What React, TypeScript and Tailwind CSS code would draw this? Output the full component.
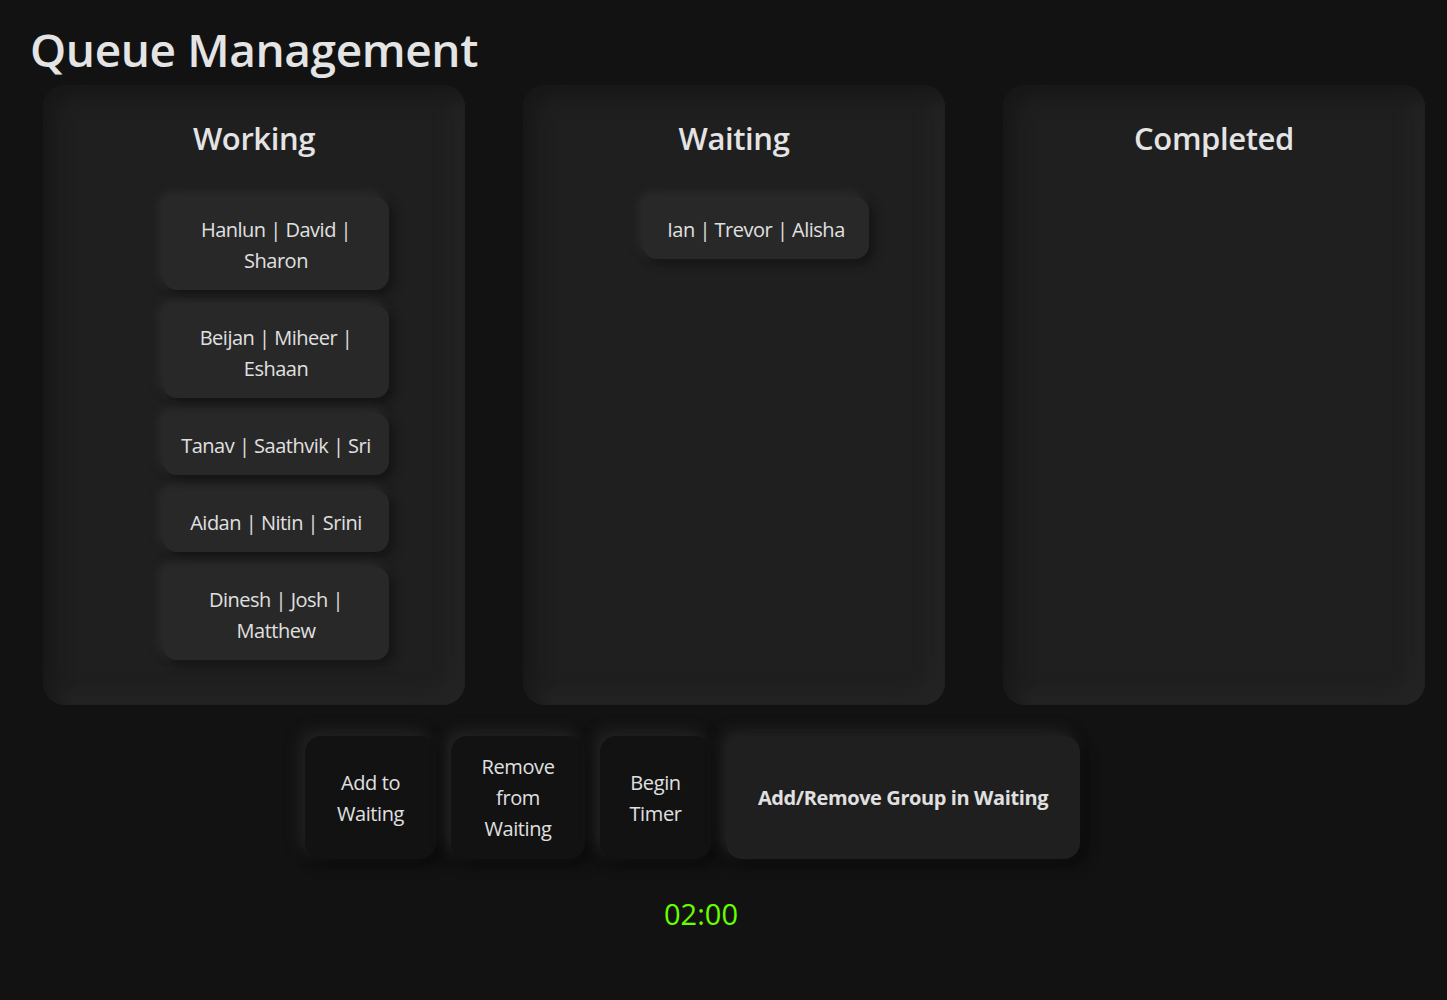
const working = [
  "Hanlun | David | Sharon",
  "Beijan | Miheer | Eshaan",
  "Tanav | Saathvik | Sri",
  "Aidan | Nitin | Srini",
  "Dinesh | Josh | Matthew",
];
const waiting = ["Ian | Trevor | Alisha"];
const completed: string[] = [];

function Column({ title, groups }: { title: string; groups: string[] }) {
  return (
    <div className="w-[422px] h-[620px] rounded-[22px] bg-[#1f1f1f] pt-[32px] shadow-[inset_10px_10px_20px_#171717,inset_-10px_-10px_20px_#262626]">
      <h2 className="text-center text-[31px] leading-[42px] tracking-[-0.4px] font-semibold text-[#e4e4e4]">{title}</h2>
      <ul className="mt-[38px] pl-[44px] flex flex-col items-center gap-[15px]">
        {groups.map((g) => (
          <li
            key={g}
            className="w-[226px] px-3 pt-[17px] pb-[14px] rounded-[14px] bg-[#282828] text-center text-[20px] leading-[31px] tracking-[-0.5px] text-[#e0e0e0] shadow-[5px_5px_10px_#151515,-4px_-4px_10px_#2e2e2e]"
          >
            {g}
          </li>
        ))}
      </ul>
    </div>
  );
}

const btn =
  "h-[123px] rounded-[16px] text-[20px] leading-[31px] tracking-[-0.4px] text-[#e0e0e0] shadow-[-6px_-6px_14px_#222222,6px_6px_14px_#0b0b0b]";

export default function App() {
  return (
    <div
      className="min-h-screen bg-[#121212] text-[#e0e0e0]"
      style={{ fontFamily: '"Open Sans", "Noto Sans", sans-serif' }}
    >
      <h1 className="pt-[19px] pl-[30px] text-[46px] leading-[60px] tracking-[-0.4px] font-semibold text-[#e4e4e4]">
        Queue Management
      </h1>

      <div className="mt-[6px] pl-[43px] flex gap-[58px]">
        <Column title="Working" groups={working} />
        <Column title="Waiting" groups={waiting} />
        <Column title="Completed" groups={completed} />
      </div>

      <div className="mt-[31px] pl-[305px] flex gap-[15px]">
        <button className={`w-[131px] px-[18px] bg-[#121212] ${btn}`}>Add to Waiting</button>
        <button className={`w-[134px] px-[18px] bg-[#121212] ${btn}`}>Remove from Waiting</button>
        <button className={`w-[111px] px-[18px] bg-[#121212] ${btn}`}>Begin Timer</button>
        <button className={`w-[354px] px-[16px] bg-[#1f1f1f] font-bold whitespace-nowrap ${btn}`}>
          Add/Remove Group in Waiting
        </button>
      </div>

      <div className="mt-[35px] pl-[321px] w-[1081px] text-center text-[29px] leading-[39px] text-[#66ff00]">
        02:00
      </div>
    </div>
  );
}
